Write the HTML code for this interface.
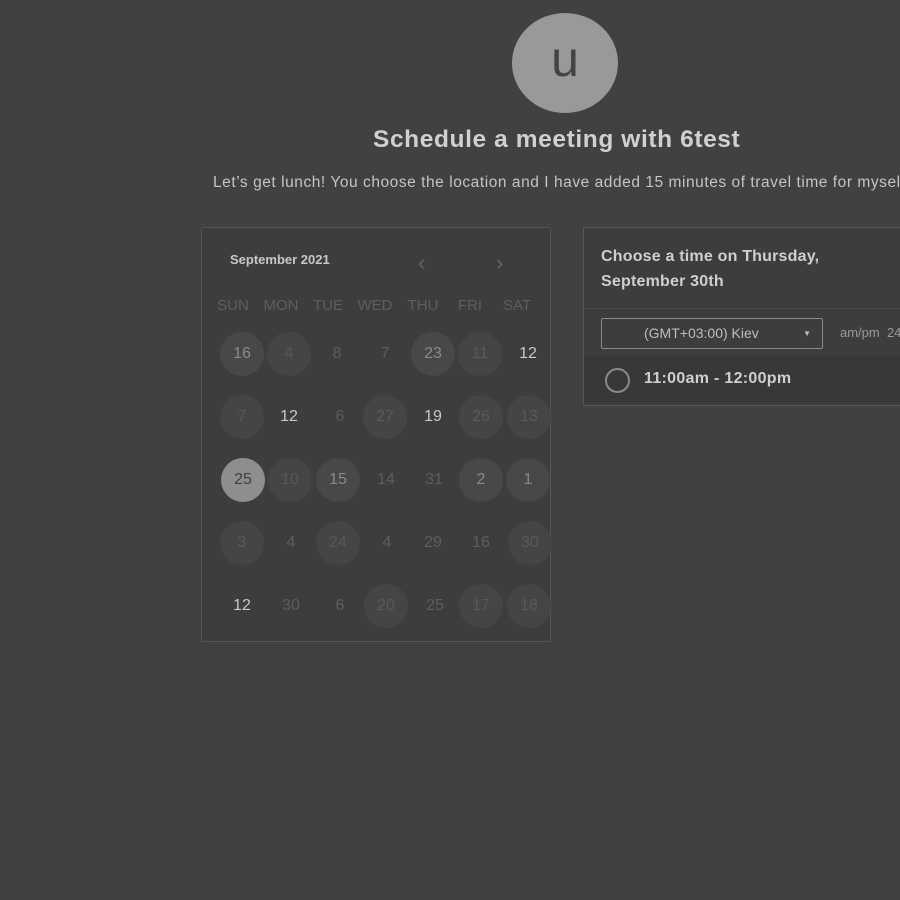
<!DOCTYPE html>
<html><head><style>
body{margin:0;width:900px;height:900px;background:#414141;font-family:"Liberation Sans",sans-serif;position:relative;overflow:hidden}
.a{position:absolute}
.av{left:512px;top:13px;width:106px;height:100px;border-radius:50%;background:#999;color:#444;font-size:50px;text-align:center;line-height:92px}
.t{left:373px;top:126px;font-size:24.5px;font-weight:bold;color:#d0d0d0;letter-spacing:0.6px;white-space:nowrap}
.s{left:213px;top:174px;font-size:15.5px;color:#c4c4c4;white-space:nowrap;letter-spacing:0.55px}
.cal{left:201px;top:227px;width:348px;height:413px;border:1px solid #555;background:#3d3d3d;border-radius:2px}
.day{position:absolute;width:44px;height:44px;margin:-22px 0 0 -22px;border-radius:50%;text-align:center;line-height:44px;font-size:16px;color:#5e5e5e}
.day.c{background:#454545;color:#595959}
.day.w{color:#c8c8c8}
.day.d{background:#484848;color:#8a8a8a}
.day.sel{background:#8e8e8e;color:#404040}
.hd{position:absolute;top:297px;font-size:15px;color:#5e5e5e;width:50px;margin-left:-25px;text-align:center}
.tp{left:583px;top:227px;width:330px;height:177px;border:1px solid #555;background:#3d3d3d}
</style></head><body>
<div class="a av">u</div>
<div class="a t">Schedule a meeting with 6test</div>
<div class="a s">Let’s get lunch! You choose the location and I have added 15 minutes of travel time for myself</div>
<div class="a cal"></div>
<div class="a" style="left:230px;top:252px;font-size:13px;font-weight:bold;color:#c8c8c8">September 2021</div>
<div class="a" style="left:418px;top:250px;font-size:22px;color:#666">‹</div>
<div class="a" style="left:496px;top:250px;font-size:22px;color:#666">›</div>
<div class="hd" style="left:233px">SUN</div><div class="hd" style="left:281px">MON</div><div class="hd" style="left:328px">TUE</div><div class="hd" style="left:375px">WED</div><div class="hd" style="left:423px">THU</div><div class="hd" style="left:470px">FRI</div><div class="hd" style="left:517px">SAT</div>
<div class="a" style="left:0;top:0">
<div class="day d" style="left:242px;top:354px">16</div><div class="day c" style="left:289px;top:354px">4</div><div class="day" style="left:337px;top:354px">8</div><div class="day" style="left:385px;top:354px">7</div><div class="day d" style="left:433px;top:354px">23</div><div class="day c" style="left:480px;top:354px">11</div><div class="day w" style="left:528px;top:354px">12</div>
<div class="day c" style="left:242px;top:417px">7</div><div class="day w" style="left:289px;top:417px">12</div><div class="day" style="left:340px;top:417px">6</div><div class="day c" style="left:385px;top:417px">27</div><div class="day w" style="left:433px;top:417px">19</div><div class="day c" style="left:481px;top:417px">26</div><div class="day c" style="left:529px;top:417px">13</div>
<div class="day sel" style="left:243px;top:480px">25</div><div class="day c" style="left:290px;top:480px">10</div><div class="day d" style="left:338px;top:480px">15</div><div class="day" style="left:386px;top:480px">14</div><div class="day" style="left:434px;top:480px">31</div><div class="day d" style="left:481px;top:480px">2</div><div class="day d" style="left:528px;top:480px">1</div>
<div class="day c" style="left:242px;top:543px">3</div><div class="day" style="left:291px;top:543px">4</div><div class="day c" style="left:338px;top:543px">24</div><div class="day" style="left:387px;top:543px">4</div><div class="day" style="left:433px;top:543px">29</div><div class="day" style="left:481px;top:543px">16</div><div class="day c" style="left:530px;top:543px">30</div>
<div class="day w" style="left:242px;top:606px">12</div><div class="day" style="left:291px;top:606px">30</div><div class="day" style="left:340px;top:606px">6</div><div class="day c" style="left:386px;top:606px">20</div><div class="day" style="left:435px;top:606px">25</div><div class="day c" style="left:481px;top:606px">17</div><div class="day c" style="left:529px;top:606px">18</div>
</div>
<div class="a tp"></div>
<div class="a" style="left:584px;top:308px;width:330px;border-top:1px solid #4a4a4a"></div>
<div class="a" style="left:601px;top:244px;font-size:16px;font-weight:bold;color:#cfcfcf;line-height:25px;letter-spacing:0.2px">Choose a time on Thursday,<br>September 30th</div>
<div class="a" style="left:601px;top:318px;width:220px;height:29px;border:1px solid #8a8a8a;border-radius:2px;font-size:14px;color:#bdbdbd;line-height:29px"><span style="margin-left:42px">(GMT+03:00) Kiev</span><span style="position:absolute;right:11px;top:0;font-size:8px">▼</span></div>
<div class="a" style="left:840px;top:325px;font-size:13px;color:#9a9a9a;white-space:nowrap">am/pm&nbsp; 24</div>
<div class="a" style="left:584px;top:356px;width:330px;height:47px;background:#383838"></div>
<div class="a" style="left:605px;top:368px;width:21px;height:21px;border:2px solid #8a8a8a;border-radius:50%"></div>
<div class="a" style="left:644px;top:370px;font-size:16px;font-weight:bold;color:#cfcfcf;letter-spacing:0.3px">11:00am - 12:00pm</div>
</body></html>
